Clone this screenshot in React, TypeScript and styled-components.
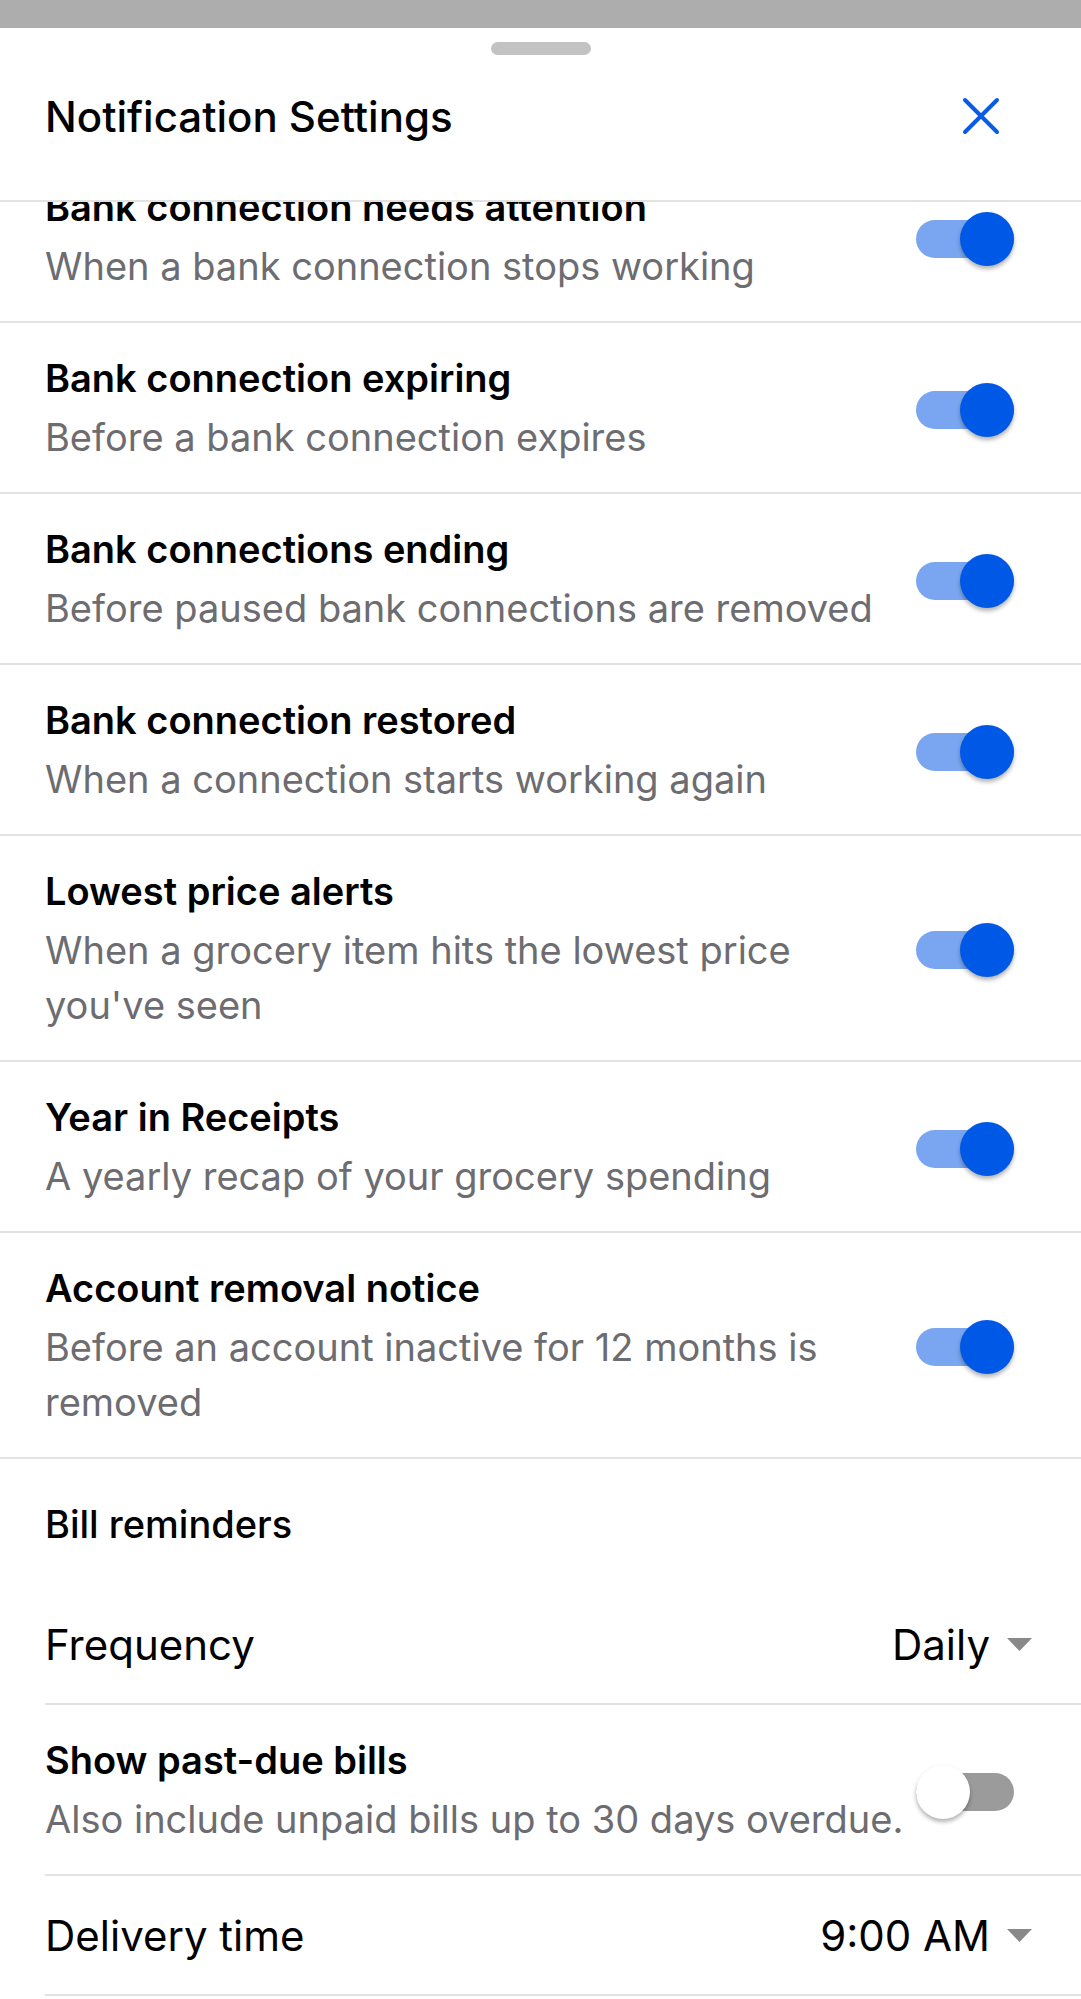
import React, { useLayoutEffect, useRef } from "react";
import styled, { createGlobalStyle } from "styled-components";

const GlobalStyle = createGlobalStyle`
  html, body {
    margin: 0;
    padding: 0;
    height: 100%;
  }
  body {
    background: #adadad;
    font-family: Inter, "Noto Sans", sans-serif;
    -webkit-font-smoothing: antialiased;
  }
  #root {
    height: 100%;
  }
`;

type Notice = {
  title: string;
  text: string;
  on: boolean;
};

const notices: Notice[] = [
  { title: "Bank connection needs attention", text: "When a bank connection stops working", on: true },
  { title: "Bank connection expiring", text: "Before a bank connection expires", on: true },
  { title: "Bank connections ending", text: "Before paused bank connections are removed", on: true },
  { title: "Bank connection restored", text: "When a connection starts working again", on: true },
  { title: "Lowest price alerts", text: "When a grocery item hits the lowest price you've seen", on: true },
  { title: "Year in Receipts", text: "A yearly recap of your grocery spending", on: true },
  { title: "Account removal notice", text: "Before an account inactive for 12 months is removed", on: true },
];

const Switch = ({ on }: { on: boolean }) => (
  <SwitchBox role="switch" aria-checked={on}>
    <Track $on={on} />
    <Knob $on={on} />
  </SwitchBox>
);

const Caret = () => (
  <svg width="25" height="13" viewBox="0 0 25 13">
    <path d="M0 0 L25 0 L12.5 13 Z" fill="#898989" />
  </svg>
);

const App = () => {
  const listRef = useRef<HTMLDivElement>(null);

  // the sheet is scrolled a little, first row sits under the header
  useLayoutEffect(() => {
    if (listRef.current) listRef.current.scrollTop = 50;
  }, []);

  return (
    <>
      <GlobalStyle />
      <Screen>
        <Backdrop />
        <Sheet>
          <SheetHeader>
            <Handle />
            <TitleBar>
              <Title>Notification Settings</Title>
              <CloseButton aria-label="Close">
                <svg width="38" height="38" viewBox="0 0 38 38">
                  <path
                    d="M3 3 L35 35 M35 3 L3 35"
                    stroke="#0a5ae8"
                    strokeWidth="4"
                    strokeLinecap="round"
                  />
                </svg>
              </CloseButton>
            </TitleBar>
          </SheetHeader>

          <List ref={listRef}>
            {notices.map((n) => (
              <ToggleRow key={n.title}>
                <TextCol>
                  <RowTitle>{n.title}</RowTitle>
                  <RowText>{n.text}</RowText>
                </TextCol>
                <Switch on={n.on} />
              </ToggleRow>
            ))}

            <SectionTitle>Bill reminders</SectionTitle>

            <SelectRow>
              <SelectLabel>Frequency</SelectLabel>
              <SelectValue>
                Daily
                <Caret />
              </SelectValue>
            </SelectRow>

            <ToggleRow $inset>
              <TextCol>
                <RowTitle>Show past-due bills</RowTitle>
                <RowText>Also include unpaid bills up to 30 days overdue.</RowText>
              </TextCol>
              <Switch on={false} />
            </ToggleRow>

            <SelectRow>
              <SelectLabel>Delivery time</SelectLabel>
              <SelectValue>
                9:00 AM
                <Caret />
              </SelectValue>
            </SelectRow>

            <BottomSpace />
          </List>
        </Sheet>
      </Screen>
    </>
  );
};

export default App;

const Screen = styled.div`
  height: 100vh;
  display: flex;
  flex-direction: column;
`;

const Backdrop = styled.div`
  height: 28px;
  flex-shrink: 0;
  background: #adadad;
`;

const Sheet = styled.div`
  flex: 1;
  min-height: 0;
  display: flex;
  flex-direction: column;
  background: #fff;
`;

const SheetHeader = styled.header`
  flex-shrink: 0;
  padding: 14px 0 23px;
  border-bottom: 2px solid #e2e2e2;
`;

const Handle = styled.div`
  width: 100px;
  height: 13px;
  margin: 0 auto;
  border-radius: 7px;
  background: #c3c3c3;
`;

const TitleBar = styled.div`
  height: 122px;
  display: flex;
  align-items: center;
  justify-content: space-between;
  padding: 0 81px 0 45px;
`;

const Title = styled.h1`
  margin: 0;
  font-size: 42px;
  font-weight: 500;
  color: #000;
`;

const CloseButton = styled.button`
  display: flex;
  padding: 0;
  border: 0;
  background: none;
`;

const List = styled.div`
  flex: 1;
  min-height: 0;
  overflow-y: auto;
  scrollbar-width: none;
  &::-webkit-scrollbar {
    display: none;
  }
`;

const ToggleRow = styled.div<{ $inset?: boolean }>`
  display: flex;
  align-items: center;
  margin-left: ${(p) => (p.$inset ? "45px" : "0")};
  padding: 31px 67px 27px ${(p) => (p.$inset ? "0" : "45px")};
  border-bottom: 2px solid #e2e2e2;
`;

const TextCol = styled.div`
  flex: 1;
  min-width: 0;
`;

const RowTitle = styled.div`
  font-size: 38px;
  line-height: 48px;
  font-weight: 600;
  color: #000;
`;

const RowText = styled.div`
  margin-top: 8px;
  font-size: 38px;
  line-height: 55px;
  color: #6c6c71;
`;

const SwitchBox = styled.div`
  position: relative;
  flex-shrink: 0;
  width: 98px;
  height: 54px;
`;

const Track = styled.div<{ $on: boolean }>`
  position: absolute;
  left: 0;
  right: 0;
  top: 8px;
  height: 38px;
  border-radius: 19px;
  background: ${(p) => (p.$on ? "#7aa6f1" : "#9b9b9b")};
`;

const Knob = styled.div<{ $on: boolean }>`
  position: absolute;
  top: 0;
  left: ${(p) => (p.$on ? "44px" : "0")};
  width: 54px;
  height: 54px;
  border-radius: 50%;
  background: ${(p) => (p.$on ? "#0058e6" : "#fff")};
  box-shadow: 0 3px 4px rgba(0, 0, 0, 0.3);
`;

const SectionTitle = styled.div`
  padding: 45px 45px 41px;
  font-size: 38px;
  line-height: 40px;
  font-weight: 500;
  color: #000;
`;

const SelectRow = styled.div`
  height: 118px;
  display: flex;
  align-items: center;
  justify-content: space-between;
  margin-left: 45px;
  padding-right: 49px;
  border-bottom: 2px solid #e2e2e2;
`;

const SelectLabel = styled.div`
  font-size: 42px;
  color: #000;
`;

const SelectValue = styled.div`
  display: flex;
  align-items: center;
  gap: 17px;
  font-size: 42px;
  color: #000;
`;

const BottomSpace = styled.div`
  height: 40px;
`;
